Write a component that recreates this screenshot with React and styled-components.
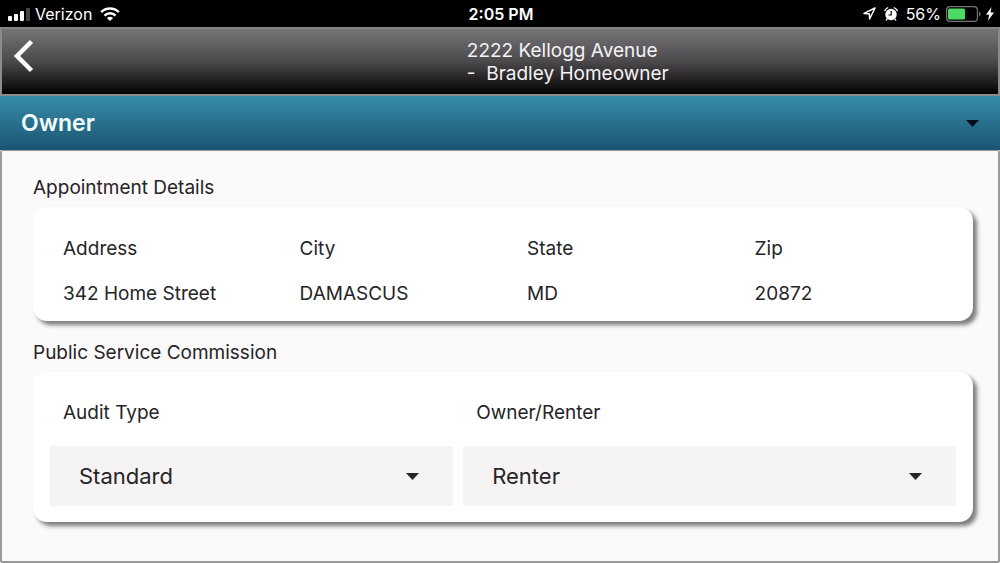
import React, { useState } from "react";
import styled, { createGlobalStyle } from "styled-components";

const GlobalStyle = createGlobalStyle`
  *, *::before, *::after { box-sizing: border-box; }
  body {
    margin: 0;
    background: #fbf9fa;
    color: #262426;
    font-family: Inter, "Liberation Sans", sans-serif;
    font-size: 19px;
    line-height: 24px;
  }
  #root { display: flex; flex-direction: column; min-height: 100vh; }
`;

const StatusBar = styled.div`
  display: grid;
  grid-template-columns: 1fr auto 1fr;
  align-items: center;
  height: 27px;
  padding: 0 6px 0 8px;
  background: #000;
  color: #fff;
  font-size: 16px;
`;

const StatusGroup = styled.div`
  display: flex;
  align-items: center;
  justify-content: ${(p) => (p.$end ? "flex-end" : "flex-start")};
  gap: ${(p) => (p.$end ? 5 : 8)}px;
`;

const Carrier = styled.div`
  display: flex;
  align-items: center;
  gap: 5px;
`;

const Power = styled(Carrier)`
  margin-left: 3px;
`;

const Clock = styled.time`
  font-weight: 600;
`;

const AppHeader = styled.header`
  display: grid;
  grid-template-columns: 7fr 8fr;
  min-height: 69px;
  border: 2px solid #8b8b8d;
  border-top-color: #858487;
  background: linear-gradient(#767477, #4b494c 50%, #0a0809 95%, #050404);
  color: #f4f3f4;
`;

const BackButton = styled.button`
  display: flex;
  justify-self: start;
  align-self: start;
  padding: 10px;
  border: 0;
  background: none;
  color: #fff;
  cursor: pointer;
`;

const Title = styled.h1`
  margin: 0;
  padding-top: 10px;
  font-size: 19px;
  font-weight: 400;
  line-height: 23px;
  white-space: pre;
`;

const SectionToggle = styled.button`
  display: flex;
  align-items: center;
  justify-content: space-between;
  min-height: 54px;
  padding: 0 21px;
  border: 0;
  background: linear-gradient(#378da7, #1a5473);
  color: #f2fbfd;
  font: 600 23px/28px Inter, "Liberation Sans", sans-serif;
  cursor: pointer;

  svg { color: #05101c; }
`;

const Panel = styled.main`
  flex: 1;
  padding: 24px 25px 36px 31px;
  border: 2px solid #9b999b;
  border-top-width: 1px;
  border-radius: 2px;
`;

const Section = styled.section`
  & + & { margin-top: 19px; }
`;

const SectionTitle = styled.h2`
  margin: 0 0 7px;
  font-size: 19px;
  font-weight: 400;
  line-height: 25px;
`;

const Card = styled.div`
  padding: ${(p) => (p.$form ? "29px 17px 16px" : "19px 0 5px 30px")};
  border-radius: 14px;
  background: #fff;
  box-shadow: 4px 4px 4px #7d7b7d;
`;

const Details = styled.table`
  width: 100%;
  border-collapse: collapse;
  table-layout: fixed;
`;

const Column = styled.col`
  width: ${(p) => p.$share}%;
`;

const HeadCell = styled.th`
  height: 45px;
  padding: 0;
  font-weight: 400;
  text-align: left;
`;

const Cell = styled.td`
  height: 45px;
  padding: 0;
`;

const Fields = styled.div`
  display: grid;
  grid-template-columns: 9fr 11fr;
  gap: 10px;
`;

const Field = styled.div`
  display: flex;
  flex-direction: column;
  gap: 21px;
`;

const Label = styled.label`
  padding-left: 13px;
`;

const SelectBox = styled.div`
  display: grid;
  align-items: center;
  background: #f5f3f4;

  > * { grid-area: 1 / 1; }

  svg {
    justify-self: end;
    margin-right: 34px;
    pointer-events: none;
  }
`;

const Select = styled.select`
  appearance: none;
  width: 100%;
  height: 60px;
  padding: 0 60px 0 29px;
  border: 0;
  border-radius: 2px;
  background: transparent;
  color: inherit;
  font: 400 22px/28px Inter, "Liberation Sans", sans-serif;
`;

const Caret = () => (
  <svg width="13" height="7" viewBox="0 0 13 7" aria-hidden="true">
    <path d="M0 0h13L6.500 7z" fill="currentColor" />
  </svg>
);

const SignalIcon = () => (
  <svg width="22" height="14" viewBox="0 0 22 14" fill="#fff" aria-hidden="true">
    <rect x="0" y="9" width="4" height="5" rx="1" />
    <rect x="6" y="7" width="4" height="7" rx="1" />
    <rect x="12" y="4" width="4" height="10" rx="1" />
    <rect x="18" y="1" width="4" height="13" rx="1" fill="#454347" />
  </svg>
);

const WifiIcon = () => (
  <svg width="20" height="14" viewBox="0 0 20 14" fill="none" stroke="#fff" strokeWidth="2.500" aria-hidden="true">
    <path d="M1.200 5.200a12.600 12.600 0 0 1 17.600 0" />
    <path d="M4.500 8.600a7.900 7.900 0 0 1 11 0" />
    <path d="M6.900 11.100a4.500 4.500 0 0 1 6.200 0L10 14z" fill="#fff" stroke="none" />
  </svg>
);

const LocationIcon = () => (
  <svg width="13" height="13" viewBox="0 0 13 13" fill="none" stroke="#fff" strokeWidth="1.500" strokeLinejoin="round" aria-hidden="true">
    <path d="M12 1L1 6.400l5.300.3.300 5.300z" />
  </svg>
);

const AlarmIcon = () => (
  <svg width="14" height="14" viewBox="0 0 14 14" aria-hidden="true">
    <circle cx="7" cy="7.500" r="5.700" fill="#fff" />
    <path d="M.8 3.600A8 8 0 0 1 3.700.8M13.200 3.600A8 8 0 0 0 10.300.8M3.300 11.800l-1 1.300M10.700 11.800l1 1.300" stroke="#fff" strokeWidth="1.300" strokeLinecap="round" fill="none" />
    <path d="M7.200 4v4H4.500" stroke="#000" strokeWidth="1.200" fill="none" />
  </svg>
);

const BatteryIcon = () => (
  <svg width="35" height="16" viewBox="0 0 35 16" aria-hidden="true">
    <rect x=".6" y=".6" width="30.800" height="14.800" rx="3.500" fill="none" stroke="#77757a" strokeWidth="1.200" />
    <rect x="2" y="2.500" width="17" height="11" rx="1.500" fill="#4cd964" />
    <path d="M33 5.500c2 .8 2 4.200 0 5z" fill="#77757a" />
  </svg>
);

const BoltIcon = () => (
  <svg width="8" height="14" viewBox="0 0 8 14" aria-hidden="true">
    <path d="M5.500 0L0 7.800h3.300L1.800 14 8 5.600H4.600z" fill="#fff" />
  </svg>
);

const BackIcon = () => (
  <svg width="22" height="34" viewBox="0 0 22 34" fill="none" stroke="currentColor" strokeWidth="4.500" aria-hidden="true">
    <path d="M19.500 2.500L5 17l14.500 14.500" />
  </svg>
);

const appointment = [
  { label: "Address", value: "342 Home Street", share: 26 },
  { label: "City", value: "DAMASCUS", share: 25 },
  { label: "State", value: "MD", share: 25 },
  { label: "Zip", value: "20872", share: 24 },
];

const fields = [
  { id: "audit-type", label: "Audit Type", options: ["Standard"] },
  { id: "owner-renter", label: "Owner/Renter", options: ["Renter", "Owner"] },
];

export default function App() {
  const [open, setOpen] = useState(true);

  return (
    <>
      <GlobalStyle />
      <StatusBar>
        <StatusGroup>
          <Carrier>
            <SignalIcon />
            <span>Verizon</span>
          </Carrier>
          <WifiIcon />
        </StatusGroup>
        <Clock>2:05 PM</Clock>
        <StatusGroup $end>
          <LocationIcon />
          <Power><AlarmIcon /></Power>
          <Power>
            <span>56%</span>
            <BatteryIcon />
            <BoltIcon />
          </Power>
        </StatusGroup>
      </StatusBar>
      <AppHeader>
        <BackButton type="button" aria-label="Back">
          <BackIcon />
        </BackButton>
        <Title>{"2222 Kellogg Avenue\n-  Bradley Homeowner"}</Title>
      </AppHeader>
      <SectionToggle type="button" aria-expanded={open} onClick={() => setOpen(!open)}>
        Owner
        <Caret />
      </SectionToggle>
      <Panel>
        {open && (
          <>
            <Section>
              <SectionTitle>Appointment Details</SectionTitle>
              <Card>
                <Details>
                  <colgroup>
                    {appointment.map((c) => <Column key={c.label} $share={c.share} />)}
                  </colgroup>
                  <thead>
                    <tr>
                      {appointment.map((c) => <HeadCell key={c.label} scope="col">{c.label}</HeadCell>)}
                    </tr>
                  </thead>
                  <tbody>
                    <tr>
                      {appointment.map((c) => <Cell key={c.label}>{c.value}</Cell>)}
                    </tr>
                  </tbody>
                </Details>
              </Card>
            </Section>
            <Section>
              <SectionTitle>Public Service Commission</SectionTitle>
              <Card $form>
                <Fields>
                  {fields.map((f) => (
                    <Field key={f.id}>
                      <Label htmlFor={f.id}>{f.label}</Label>
                      <SelectBox>
                        <Select id={f.id}>
                          {f.options.map((o) => <option key={o}>{o}</option>)}
                        </Select>
                        <Caret />
                      </SelectBox>
                    </Field>
                  ))}
                </Fields>
              </Card>
            </Section>
          </>
        )}
      </Panel>
    </>
  );
}
